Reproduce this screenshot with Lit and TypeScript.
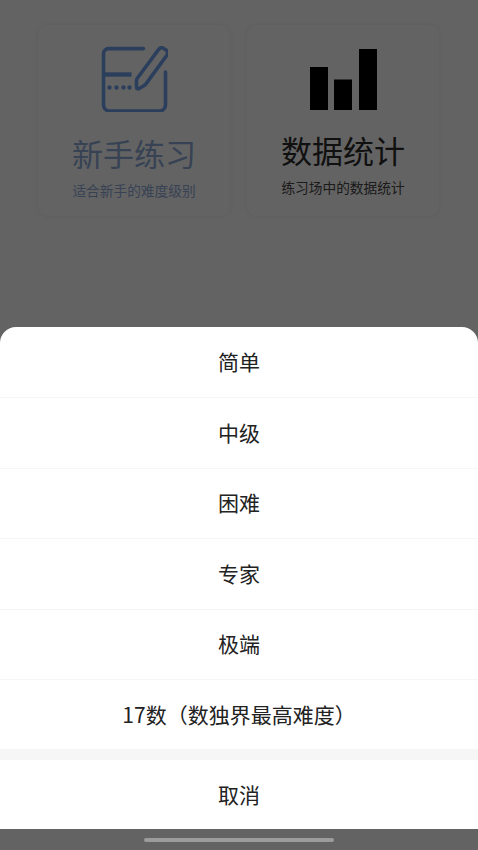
import { LitElement, html, css, svg } from "lit";
import { customElement } from "lit/decorators.js";

const editIcon = svg`<svg class="icon" viewBox="-1.500 0 68 66" width="68" height="66" fill="none" stroke="#6d9ee6" stroke-width="3.600" stroke-linecap="round" stroke-linejoin="round">
  <path d="M42 2.600H7a5 5 0 0 0-5 5V59a6 6 0 0 0 6 6h50a6 6 0 0 0 6-6V26"/>
  <path d="M2 28.500H30" stroke-width="4.400" stroke-linecap="butt"/>
  <path d="M35 34.500V41.500a1.500 1.500 0 0 0 2.300 1.200l6-3.600a3 3 0 0 0 1-1L65.500 9a3.600 3.600 0 0 0-1-5l-2.300-1.600a3.600 3.600 0 0 0-5 1L36 32a4 4 0 0 0-1 2.500Z"/>
  <path d="M8 41.500h.01M15 41.500h.01M22 41.500h.01M28 41.500h.01" stroke-width="4.400"/>
</svg>`;

const barsIcon = svg`<svg class="icon" viewBox="0 0 68 66" width="68" height="66" fill="#000">
  <rect x="1" y="19" width="18" height="43"/>
  <rect x="25" y="31.500" width="18" height="30.500"/>
  <rect x="50" y="1" width="18" height="61"/>
</svg>`;

const options = ["简单", "中级", "困难", "专家", "极端", "17数（数独界最高难度）"];

@customElement("app-root")
export class AppRoot extends LitElement {
  static styles = css`
    :host {
      display: block;
      position: relative;
      width: 478px;
      height: 850px;
      overflow: hidden;
      background: #f8f8f8;
      font-family: "Noto Sans CJK SC", "Noto Sans", sans-serif;
      color: #111;
    }
    .cards {
      display: flex;
      gap: 17px;
      padding: 25px 0 0 38px;
    }
    .card {
      box-sizing: border-box;
      width: 192px;
      height: 191px;
      padding-top: 21px;
      display: flex;
      flex-direction: column;
      align-items: center;
      border-radius: 10px;
      background: #f8f8f8;
      box-shadow: 0 0 6px rgba(0, 0, 0, 0.08);
    }
    .icon {
      display: block;
      flex: none;
    }
    .title {
      margin-top: 17.500px;
      font-size: 31px;
      line-height: 46px;
      white-space: nowrap;
    }
    .sub {
      margin-top: 5.500px;
      font-size: 13.700px;
      line-height: 18px;
      white-space: nowrap;
    }
    .blue {
      color: #8ba5d2;
    }
    .dark {
      padding-top: 23px;
    }
    .dark .title {
      margin-top: 13px;
      color: #2a2a2a;
    }
    .dark .sub {
      margin-top: 5px;
      color: #444;
    }
    .scrim {
      position: absolute;
      inset: 0;
      background: rgba(0, 0, 0, 0.6);
    }
    .sheet {
      position: absolute;
      left: 0;
      right: 0;
      top: 327px;
      padding-top: 1px;
      background: #fff;
      border-radius: 16px 16px 0 0;
      overflow: hidden;
    }
    .option {
      box-sizing: border-box;
      height: 70.400px;
      padding-bottom: 2px;
      display: flex;
      align-items: center;
      justify-content: center;
      font-size: 21px;
      color: #222;
      border-bottom: 1px solid #f6f6f6;
      white-space: nowrap;
    }
    .option:first-child {
      padding-bottom: 4px;
    }
    .option:last-of-type {
      border-bottom: none;
    }
    .gap {
      height: 10px;
      background: #f6f6f6;
    }
    .cancel {
      box-sizing: border-box;
      height: 69px;
      padding-bottom: 2px;
      display: flex;
      align-items: center;
      justify-content: center;
      font-size: 21px;
      color: #222;
    }
    .home-bar {
      position: absolute;
      left: 144px;
      top: 838px;
      width: 190px;
      height: 4px;
      border-radius: 2px;
      background: #9c9c9c;
    }
  `;

  render() {
    return html`
      <div class="cards">
        <div class="card blue">
          ${editIcon}
          <div class="title">新手练习</div>
          <div class="sub">适合新手的难度级别</div>
        </div>
        <div class="card dark">
          ${barsIcon}
          <div class="title">数据统计</div>
          <div class="sub">练习场中的数据统计</div>
        </div>
      </div>
      <div class="scrim"></div>
      <div class="sheet">
        ${options.map((o) => html`<div class="option">${o}</div>`)}
        <div class="gap"></div>
        <div class="cancel">取消</div>
      </div>
      <div class="home-bar"></div>
    `;
  }
}
